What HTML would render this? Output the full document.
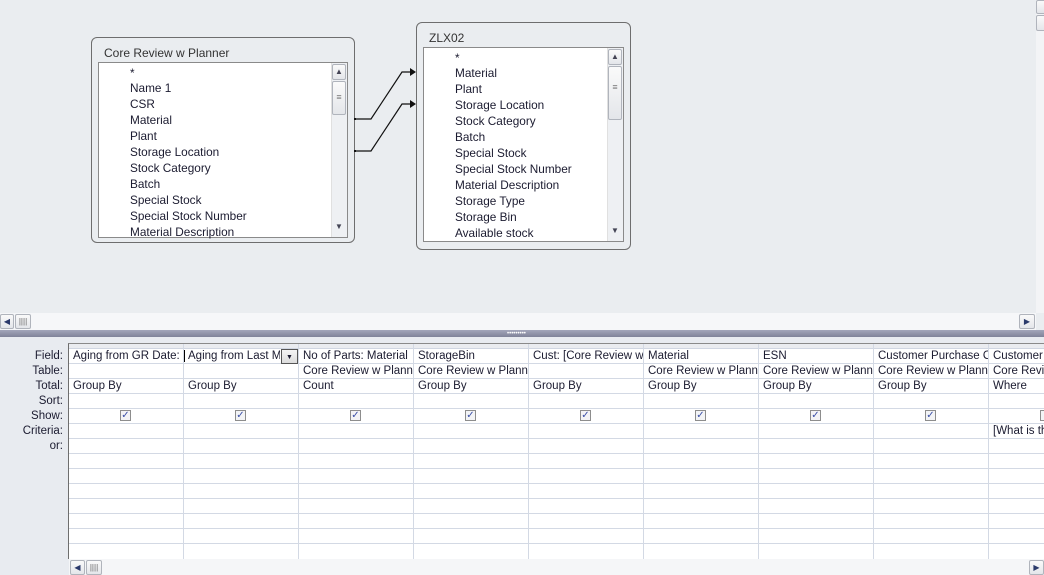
<!DOCTYPE html>
<html><head><style>
*{margin:0;padding:0;box-sizing:border-box}
body{width:1044px;height:575px;overflow:hidden;background:#eaedf0;font-family:"Liberation Sans",sans-serif;font-size:11.5px;color:#1b1b30;position:relative}
.a{position:absolute}
.tbl{position:absolute;border:1px solid #6e6e6e;border-radius:6px;background:#eaedf0}
.title{position:absolute;font-size:12px;color:#333}
.list{position:absolute;background:#fff;border:1px solid #8a8a8a;font-size:11.8px}
.list div{position:absolute;white-space:nowrap}
.vs{position:absolute;background:#eef0f3;border-left:1px solid #e0e0e0}
.btn{position:absolute;border:1px solid #b0b4bc;border-radius:2px;background:linear-gradient(#fafafa,#e4e6ea)}
.lbl{position:absolute;right:981px;text-align:right;width:66px}
.cell{position:absolute;white-space:nowrap;overflow:hidden;padding-left:4px}
.cb{position:absolute;width:11px;height:11px;border:1px solid #8d8d8d;background:#f3f4f6;font-size:10px;line-height:9px;text-align:center;color:#3b4fa8}
</style></head><body>
<div class="tbl" style="left:91px;top:37px;width:264px;height:206px"></div>
<div class="title" style="left:104px;top:46px">Core Review w Planner</div>
<div class="list" style="left:98px;top:62px;width:250px;height:176px">
<div style="left:31px;top:3px">*</div>
<div style="left:31px;top:18px">Name 1</div>
<div style="left:31px;top:34px">CSR</div>
<div style="left:31px;top:50px">Material</div>
<div style="left:31px;top:66px">Plant</div>
<div style="left:31px;top:82px">Storage Location</div>
<div style="left:31px;top:98px">Stock Category</div>
<div style="left:31px;top:114px">Batch</div>
<div style="left:31px;top:130px">Special Stock</div>
<div style="left:31px;top:146px">Special Stock Number</div>
<div style="left:31px;top:162px">Material Description</div>
<div class="vs" style="left:232px;top:0;width:16px;height:174px"></div>
<div class="btn" style="left:233px;top:1px;width:14px;height:16px;font-size:8px;color:#445;text-align:center;line-height:14px">▲</div>
<div class="btn" style="left:233px;top:18px;width:14px;height:34px;font-size:9px;color:#777;text-align:center;line-height:30px">≡</div>
<div style="left:233px;top:157px;width:14px;height:16px;font-size:8px;color:#445;text-align:center;line-height:14px">▼</div>
</div>
<div class="tbl" style="left:416px;top:22px;width:215px;height:228px"></div>
<div class="title" style="left:429px;top:31px">ZLX02</div>
<div class="list" style="left:423px;top:47px;width:201px;height:195px">
<div style="left:31px;top:3px">*</div>
<div style="left:31px;top:18px">Material</div>
<div style="left:31px;top:34px">Plant</div>
<div style="left:31px;top:50px">Storage Location</div>
<div style="left:31px;top:66px">Stock Category</div>
<div style="left:31px;top:82px">Batch</div>
<div style="left:31px;top:98px">Special Stock</div>
<div style="left:31px;top:114px">Special Stock Number</div>
<div style="left:31px;top:130px">Material Description</div>
<div style="left:31px;top:146px">Storage Type</div>
<div style="left:31px;top:162px">Storage Bin</div>
<div style="left:31px;top:178px">Available stock</div>
<div class="vs" style="left:183px;top:0;width:16px;height:193px"></div>
<div class="btn" style="left:184px;top:1px;width:14px;height:16px;font-size:8px;color:#445;text-align:center;line-height:14px">▲</div>
<div class="btn" style="left:184px;top:18px;width:14px;height:54px;font-size:9px;color:#777;text-align:center;line-height:40px">≡</div>
<div style="left:184px;top:176px;width:14px;height:16px;font-size:8px;color:#445;text-align:center;line-height:14px">▼</div>
</div>
<svg class="a" style="left:0;top:0" width="1044" height="330">
<path d="M355 119H371L402 72H412M355 151H371L402 104H412" fill="none" stroke="#111" stroke-width="1.2"/>
<path d="M410 68L416 72L410 76ZM410 100L416 104L410 108Z" fill="#111"/>
<rect x="354" y="118" width="2" height="2" fill="#111"/><rect x="354" y="150" width="2" height="2" fill="#111"/>
</svg>
<div class="a" style="left:1036px;top:0;width:8px;height:313px;background:#f3f4f6"></div>
<div class="btn" style="left:1036px;top:0;width:10px;height:14px"></div>
<div class="btn" style="left:1036px;top:15px;width:10px;height:16px"></div>
<div class="a" style="left:0;top:313px;width:1036px;height:17px;background:#f6f7f9"></div>
<div class="btn" style="left:0;top:314px;width:14px;height:15px;font-size:8px;line-height:13px;text-align:center;color:#2b3a6b">◀</div>
<div class="btn" style="left:15px;top:314px;width:16px;height:15px;font-size:8px;line-height:13px;text-align:center;color:#666">||||</div>
<div class="btn" style="left:1019px;top:314px;width:16px;height:15px;font-size:8px;line-height:13px;text-align:center;color:#2b3a6b">▶</div>
<div class="a" style="left:0;top:330px;width:1044px;height:7px;background:linear-gradient(#a3a6ba,#7f8399)"></div>
<div class="a" style="left:507px;top:331px;font-size:6px;color:#fff;letter-spacing:0">•••••••••</div>
<div class="a" style="left:0;top:337px;width:1044px;height:238px;background:#e8ebf0"></div>
<div class="a" style="left:68px;top:343px;width:976px;height:216px;background:#fff;border-left:1px solid #6e6e6e;border-top:1px solid #8a8a8a"></div>
<div class="a" style="left:69px;top:344px;width:975px;height:5px;background:#eaecf0;border-bottom:1px solid #d0d6e2"></div>
<svg class="a" style="left:0;top:0" width="1044" height="575">
<g stroke="#d3d9e4" stroke-width="1">
<path d="M69 363.5H1044M69 378.5H1044M69 393.5H1044M69 408.5H1044M69 423.5H1044M69 438.5H1044M69 453.5H1044M69 468.5H1044M69 483.5H1044M69 498.5H1044M69 513.5H1044M69 528.5H1044M69 543.5H1044"/>
<path d="M183.5 344V559M298.5 344V559M413.5 344V559M528.5 344V559M643.5 344V559M758.5 344V559M873.5 344V559M988.5 344V559"/>
</g>
</svg>
<div class="lbl" style="top:350px">Field:</div>
<div class="lbl" style="top:365px">Table:</div>
<div class="lbl" style="top:380px">Total:</div>
<div class="lbl" style="top:395px">Sort:</div>
<div class="lbl" style="top:410px">Show:</div>
<div class="lbl" style="top:425px">Criteria:</div>
<div class="lbl" style="top:440px">or:</div>
<div class="cell" style="left:69px;top:350px;width:114px">Aging from GR Date:</div>
<div class="cell" style="left:69px;top:380px;width:114px">Group By</div>
<div class="cell" style="left:184px;top:350px;width:96px;padding-left:3px;border-left:1px solid #000">Aging from Last M</div>
<div class="a" style="left:281px;top:349px;width:17px;height:15px;border:1px solid #555;background:linear-gradient(#f4f4f4,#dcdcdc);font-size:7px;text-align:center;line-height:15px">▼</div>
<div class="cell" style="left:184px;top:380px;width:114px">Group By</div>
<div class="cell" style="left:299px;top:350px;width:114px">No of Parts: Material</div>
<div class="cell" style="left:299px;top:365px;width:114px">Core Review w Planne</div>
<div class="cell" style="left:299px;top:380px;width:114px">Count</div>
<div class="cell" style="left:414px;top:350px;width:114px">StorageBin</div>
<div class="cell" style="left:414px;top:365px;width:114px">Core Review w Planne</div>
<div class="cell" style="left:414px;top:380px;width:114px">Group By</div>
<div class="cell" style="left:529px;top:350px;width:114px">Cust: [Core Review w</div>
<div class="cell" style="left:529px;top:380px;width:114px">Group By</div>
<div class="cell" style="left:644px;top:350px;width:114px">Material</div>
<div class="cell" style="left:644px;top:365px;width:114px">Core Review w Planne</div>
<div class="cell" style="left:644px;top:380px;width:114px">Group By</div>
<div class="cell" style="left:759px;top:350px;width:114px">ESN</div>
<div class="cell" style="left:759px;top:365px;width:114px">Core Review w Planne</div>
<div class="cell" style="left:759px;top:380px;width:114px">Group By</div>
<div class="cell" style="left:874px;top:350px;width:114px">Customer Purchase O</div>
<div class="cell" style="left:874px;top:365px;width:114px">Core Review w Planne</div>
<div class="cell" style="left:874px;top:380px;width:114px">Group By</div>
<div class="cell" style="left:989px;top:350px;width:55px">Customer</div>
<div class="cell" style="left:989px;top:365px;width:55px">Core Revie</div>
<div class="cell" style="left:989px;top:380px;width:55px">Where</div>
<div class="cell" style="left:989px;top:425px;width:55px">[What is th</div>
<div class="cb" style="left:120px;top:410px">✓</div>
<div class="cb" style="left:235px;top:410px">✓</div>
<div class="cb" style="left:350px;top:410px">✓</div>
<div class="cb" style="left:465px;top:410px">✓</div>
<div class="cb" style="left:580px;top:410px">✓</div>
<div class="cb" style="left:695px;top:410px">✓</div>
<div class="cb" style="left:810px;top:410px">✓</div>
<div class="cb" style="left:925px;top:410px">✓</div>
<div class="cb" style="left:1040px;top:410px"></div>
<div class="a" style="left:69px;top:559px;width:975px;height:16px;background:#f5f6f8"></div>
<div class="btn" style="left:70px;top:560px;width:15px;height:15px;font-size:8px;line-height:13px;text-align:center;color:#2b3a6b">◀</div>
<div class="btn" style="left:86px;top:560px;width:16px;height:15px;font-size:8px;line-height:13px;text-align:center;color:#666">||||</div>
<div class="btn" style="left:1029px;top:560px;width:15px;height:15px;font-size:8px;line-height:13px;text-align:center;color:#2b3a6b">▶</div>
</body></html>
